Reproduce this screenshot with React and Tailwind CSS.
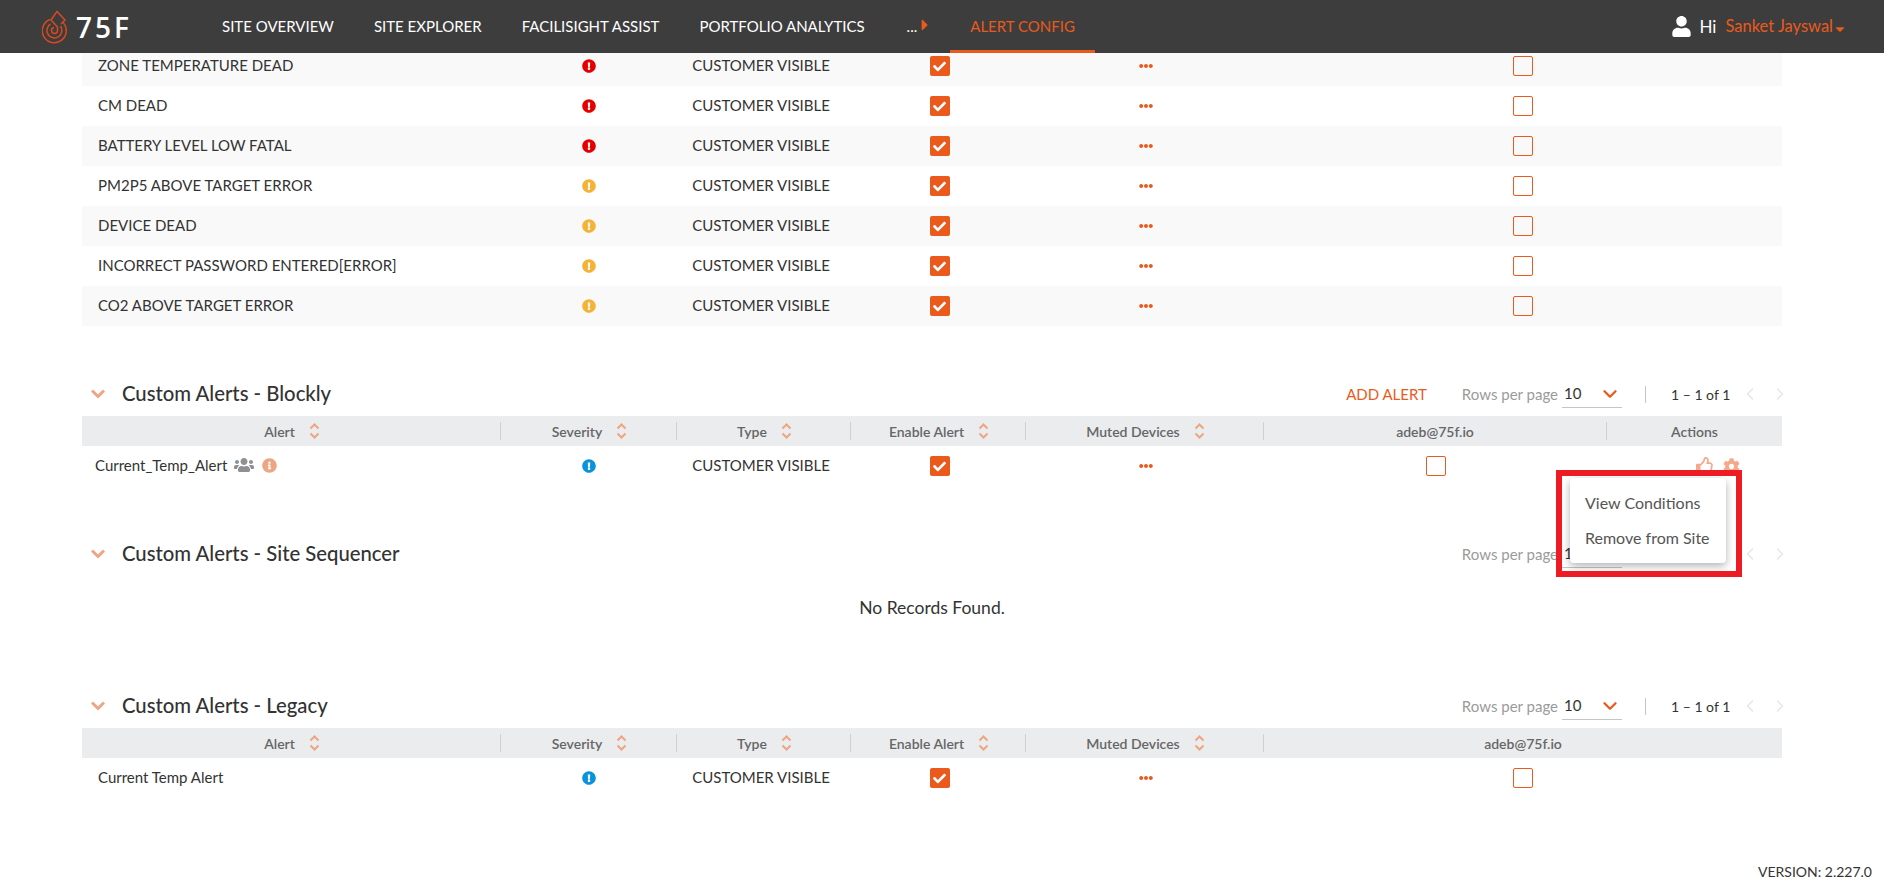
import { ChevronDown, ChevronLeft, ChevronRight } from "lucide-react";
import {
  FaCaretDown,
  FaCaretRight,
  FaCheck,
  FaCog,
  FaEllipsisH,
  FaExclamationCircle,
  FaInfoCircle,
  FaRegThumbsUp,
  FaUser,
  FaUsers,
} from "react-icons/fa";

const navItems = ["SITE OVERVIEW", "SITE EXPLORER", "FACILISIGHT ASSIST", "PORTFOLIO ANALYTICS"];

const systemAlerts = [
  { name: "ZONE TEMPERATURE DEAD", color: "text-[#e60000]" },
  { name: "CM DEAD", color: "text-[#e60000]" },
  { name: "BATTERY LEVEL LOW FATAL", color: "text-[#e60000]" },
  { name: "PM2P5 ABOVE TARGET ERROR", color: "text-[#f5b335]" },
  { name: "DEVICE DEAD", color: "text-[#f5b335]" },
  { name: "INCORRECT PASSWORD ENTERED[ERROR]", color: "text-[#f5b335]" },
  { name: "CO2 ABOVE TARGET ERROR", color: "text-[#f5b335]" },
];

const wideCols = "grid grid-cols-[419px_176px_174px_175px_238px_518px] items-center";
const actionCols = "grid grid-cols-[419px_176px_174px_175px_238px_343px_175px] items-center";

function Logo() {
  return (
    <div className="flex items-center w-[160px]">
      <svg width="26" height="34" viewBox="0 0 26 34" fill="none" stroke="#d9491f" strokeWidth="1.5">
        <path d="M8 9.5 A12 12 0 1 0 20.5 12" />
        <path d="M8.5 14 A7.5 7.5 0 1 0 18.5 16" />
        <path d="M12 17.5 A3 3 0 1 0 15.5 20.5 L15.5 17 L9 10 L15 1.5 L23 10 L19 14" />
      </svg>
      <span className="ml-[8px] text-[28px] leading-none font-['Open_Sans',sans-serif] font-semibold text-white tracking-[3px]">75F</span>
    </div>
  );
}

function TopBar() {
  return (
    <header className="relative z-30 h-[53px] bg-[#3d3d3d] flex items-center pl-[42px] pr-[37px] text-[15px] shrink-0">
      <Logo />
      <nav className="flex items-center h-full">
        {navItems.map((item) => (
          <a key={item} className="px-5 text-white">{item}</a>
        ))}
        <span className="flex items-center pl-[22px] pr-[16px] text-white">
          <span>...</span>
          <FaCaretRight className="text-[#e95a1c] -ml-[1px] -mt-1" size={18} />
        </span>
        <a className="h-full flex items-center px-5 text-[#e95a1c] border-b-[3px] border-[#e95a1c] pt-[3px]">ALERT CONFIG</a>
      </nav>
      <div className="ml-auto flex items-center">
        <FaUser className="text-white" size={21} />
        <span className="ml-[7px] text-[17px] text-white">Hi</span>
        <span className="ml-[9px] text-[16.5px] text-[#e95a1c]">Sanket Jayswal</span>
        <FaCaretDown className="text-[#e95a1c] mt-1" size={14} />
      </div>
    </header>
  );
}

function Checkbox({ checked }) {
  if (checked) {
    return (
      <span className="w-5 h-5 rounded-[2px] bg-[#e95a1c] flex items-center justify-center">
        <FaCheck className="text-white" size={13} />
      </span>
    );
  }
  return <span className="w-5 h-5 rounded-[2px] border border-[#e95a1c] block" />;
}

function SortIcon() {
  return (
    <svg className="ml-[14px]" width="11" height="16" viewBox="0 0 11 16" fill="none" stroke="#eda583" strokeWidth="2">
      <path d="M1.5 5.5 L5.5 1.5 L9.5 5.5" />
      <path d="M1.5 10.5 L5.5 14.5 L9.5 10.5" />
    </svg>
  );
}

function HeadCell({ label, sort, last }) {
  return (
    <div className={`h-[18px] flex items-center justify-center ${sort ? "pl-[2px]" : ""} ${last ? "" : "border-r border-[#cfd0d2]"}`}>
      <span>{label}</span>
      {sort && <SortIcon />}
    </div>
  );
}

function TableHead({ withActions }) {
  return (
    <div className={`${withActions ? actionCols : wideCols} h-[30px] bg-[#ebecee] text-[14px] font-semibold text-[#666]`}>
      <HeadCell label="Alert" sort />
      <HeadCell label="Severity" sort />
      <HeadCell label="Type" sort />
      <HeadCell label="Enable Alert" sort />
      <HeadCell label="Muted Devices" sort />
      <HeadCell label="adeb@75f.io" last={!withActions} />
      {withActions && <HeadCell label="Actions" last />}
    </div>
  );
}

function AlertRow({ name, color, shaded, first }) {
  return (
    <div className={`${wideCols} h-10 ${shaded ? "bg-[#f9f9f9]" : ""} ${first ? "-mt-[7px]" : ""}`}>
      <div className="pl-4 pb-[2px]">{name}</div>
      <div className="flex justify-center"><FaExclamationCircle className={color} size={14} /></div>
      <div className="text-center pr-[6px] pb-[2px]">CUSTOMER VISIBLE</div>
      <div className="flex justify-center pl-[2px]"><Checkbox checked /></div>
      <div className="flex justify-center pl-[2px]"><FaEllipsisH className="text-[#e95a1c]" size={14} /></div>
      <div className="flex justify-center"><Checkbox /></div>
    </div>
  );
}

function BlocklyRow() {
  return (
    <div className={`${actionCols} h-10`}>
      <div className="pl-[13px] pb-[2px] flex items-center">
        <span>Current_Temp_Alert</span>
        <FaUsers className="ml-[7px] text-[#8e9094]" size={20} />
        <FaInfoCircle className="ml-[8px] text-[#eda583]" size={15} />
      </div>
      <div className="flex justify-center"><FaExclamationCircle className="text-[#0a93dd]" size={14} /></div>
      <div className="text-center pr-[6px] pb-[2px]">CUSTOMER VISIBLE</div>
      <div className="flex justify-center pl-[2px]"><Checkbox checked /></div>
      <div className="flex justify-center pl-[2px]"><FaEllipsisH className="text-[#e95a1c]" size={14} /></div>
      <div className="flex justify-center"><Checkbox /></div>
      <div className="flex justify-end items-center pr-[42px] text-[#f3a98a]">
        <FaRegThumbsUp size={18} />
        <FaCog className="ml-[9px]" size={17} />
      </div>
    </div>
  );
}

function Pagination({ range }) {
  return (
    <div className="flex items-center -mr-2">
      <span className="text-[15px] text-[#9b9b9b]">Rows per page</span>
      <div className="ml-[4px] w-[60px] h-[28px] border-b border-[#c4c4c4] flex items-center justify-between pl-[2px] pr-[1px]">
        <span className="text-[15px]">10</span>
        <ChevronDown className="text-[#e95a1c]" size={22} strokeWidth={2.5} />
      </div>
      <span className="ml-[23px] h-[17px] border-l border-[#c4c4c4]" />
      <span className="ml-[25px] w-[58px] whitespace-nowrap text-[14px]">{range ? "1 – 1 of 1" : ""}</span>
      <ChevronLeft className="ml-[11px] text-[#e8e8e8]" size={20} />
      <ChevronRight className="ml-[10px] text-[#e8e8e8]" size={20} />
    </div>
  );
}

function SectionTitle({ title, addAlert, range }) {
  return (
    <div className="h-11 flex items-center">
      <svg className="ml-[9px]" width="14" height="10" viewBox="0 0 14 10" fill="none" stroke="#f1a483" strokeWidth="3">
        <path d="M1 1.5 L7 7.5 L13 1.5" />
      </svg>
      <h2 className="ml-[17px] pb-[2px] text-[20.3px] font-medium text-[#333]">{title}</h2>
      <div className="ml-auto flex items-center">
        {addAlert && <a className="mr-[35px] text-[15px] text-[#e95a1c]">ADD ALERT</a>}
        <Pagination range={range} />
      </div>
    </div>
  );
}

function Popup() {
  return (
    <div className="absolute left-[1488px] top-[425px] w-[156px] h-[85px] bg-white rounded-[4px] shadow-[0_3px_8px_rgba(0,0,0,0.3)] pl-[15px] pt-[7px] text-[16px] text-[#555] z-10">
      <div className="h-[35px] flex items-center">View Conditions</div>
      <div className="h-[35px] flex items-center">Remove from Site</div>
    </div>
  );
}

export default function App() {
  return (
    <div className="min-h-[880px] h-[880px] flex flex-col bg-white text-[15px] text-[#333] font-['Lato',sans-serif] overflow-hidden">
      <TopBar />
      <main className="relative ml-[82px] w-[1700px]">
        {systemAlerts.map((alert, i) => (
          <AlertRow key={alert.name} {...alert} shaded={i % 2 === 0} first={i === 0} />
        ))}

        <section className="mt-[46px]">
          <SectionTitle title="Custom Alerts - Blockly" addAlert range />
          <TableHead withActions />
          <BlocklyRow />
        </section>

        <section className="mt-[46px]">
          <SectionTitle title="Custom Alerts - Site Sequencer" />
          <div className="h-[62px] flex items-center justify-center pt-[2px] text-[17.5px]">No Records Found.</div>
        </section>

        <section className="mt-[46px]">
          <SectionTitle title="Custom Alerts - Legacy" range />
          <TableHead />
          <AlertRow name="Current Temp Alert" color="text-[#0a93dd]" />
        </section>

        <Popup />
        {/* red annotation box from the screenshot */}
        <div className="absolute left-[1474px] top-[417px] w-[186px] h-[107px] border-[6px] border-[#ed1c24] z-20" />
      </main>
      <footer className="mt-auto pr-3 text-right text-[14px] leading-4">VERSION: 2.227.0</footer>
    </div>
  );
}
